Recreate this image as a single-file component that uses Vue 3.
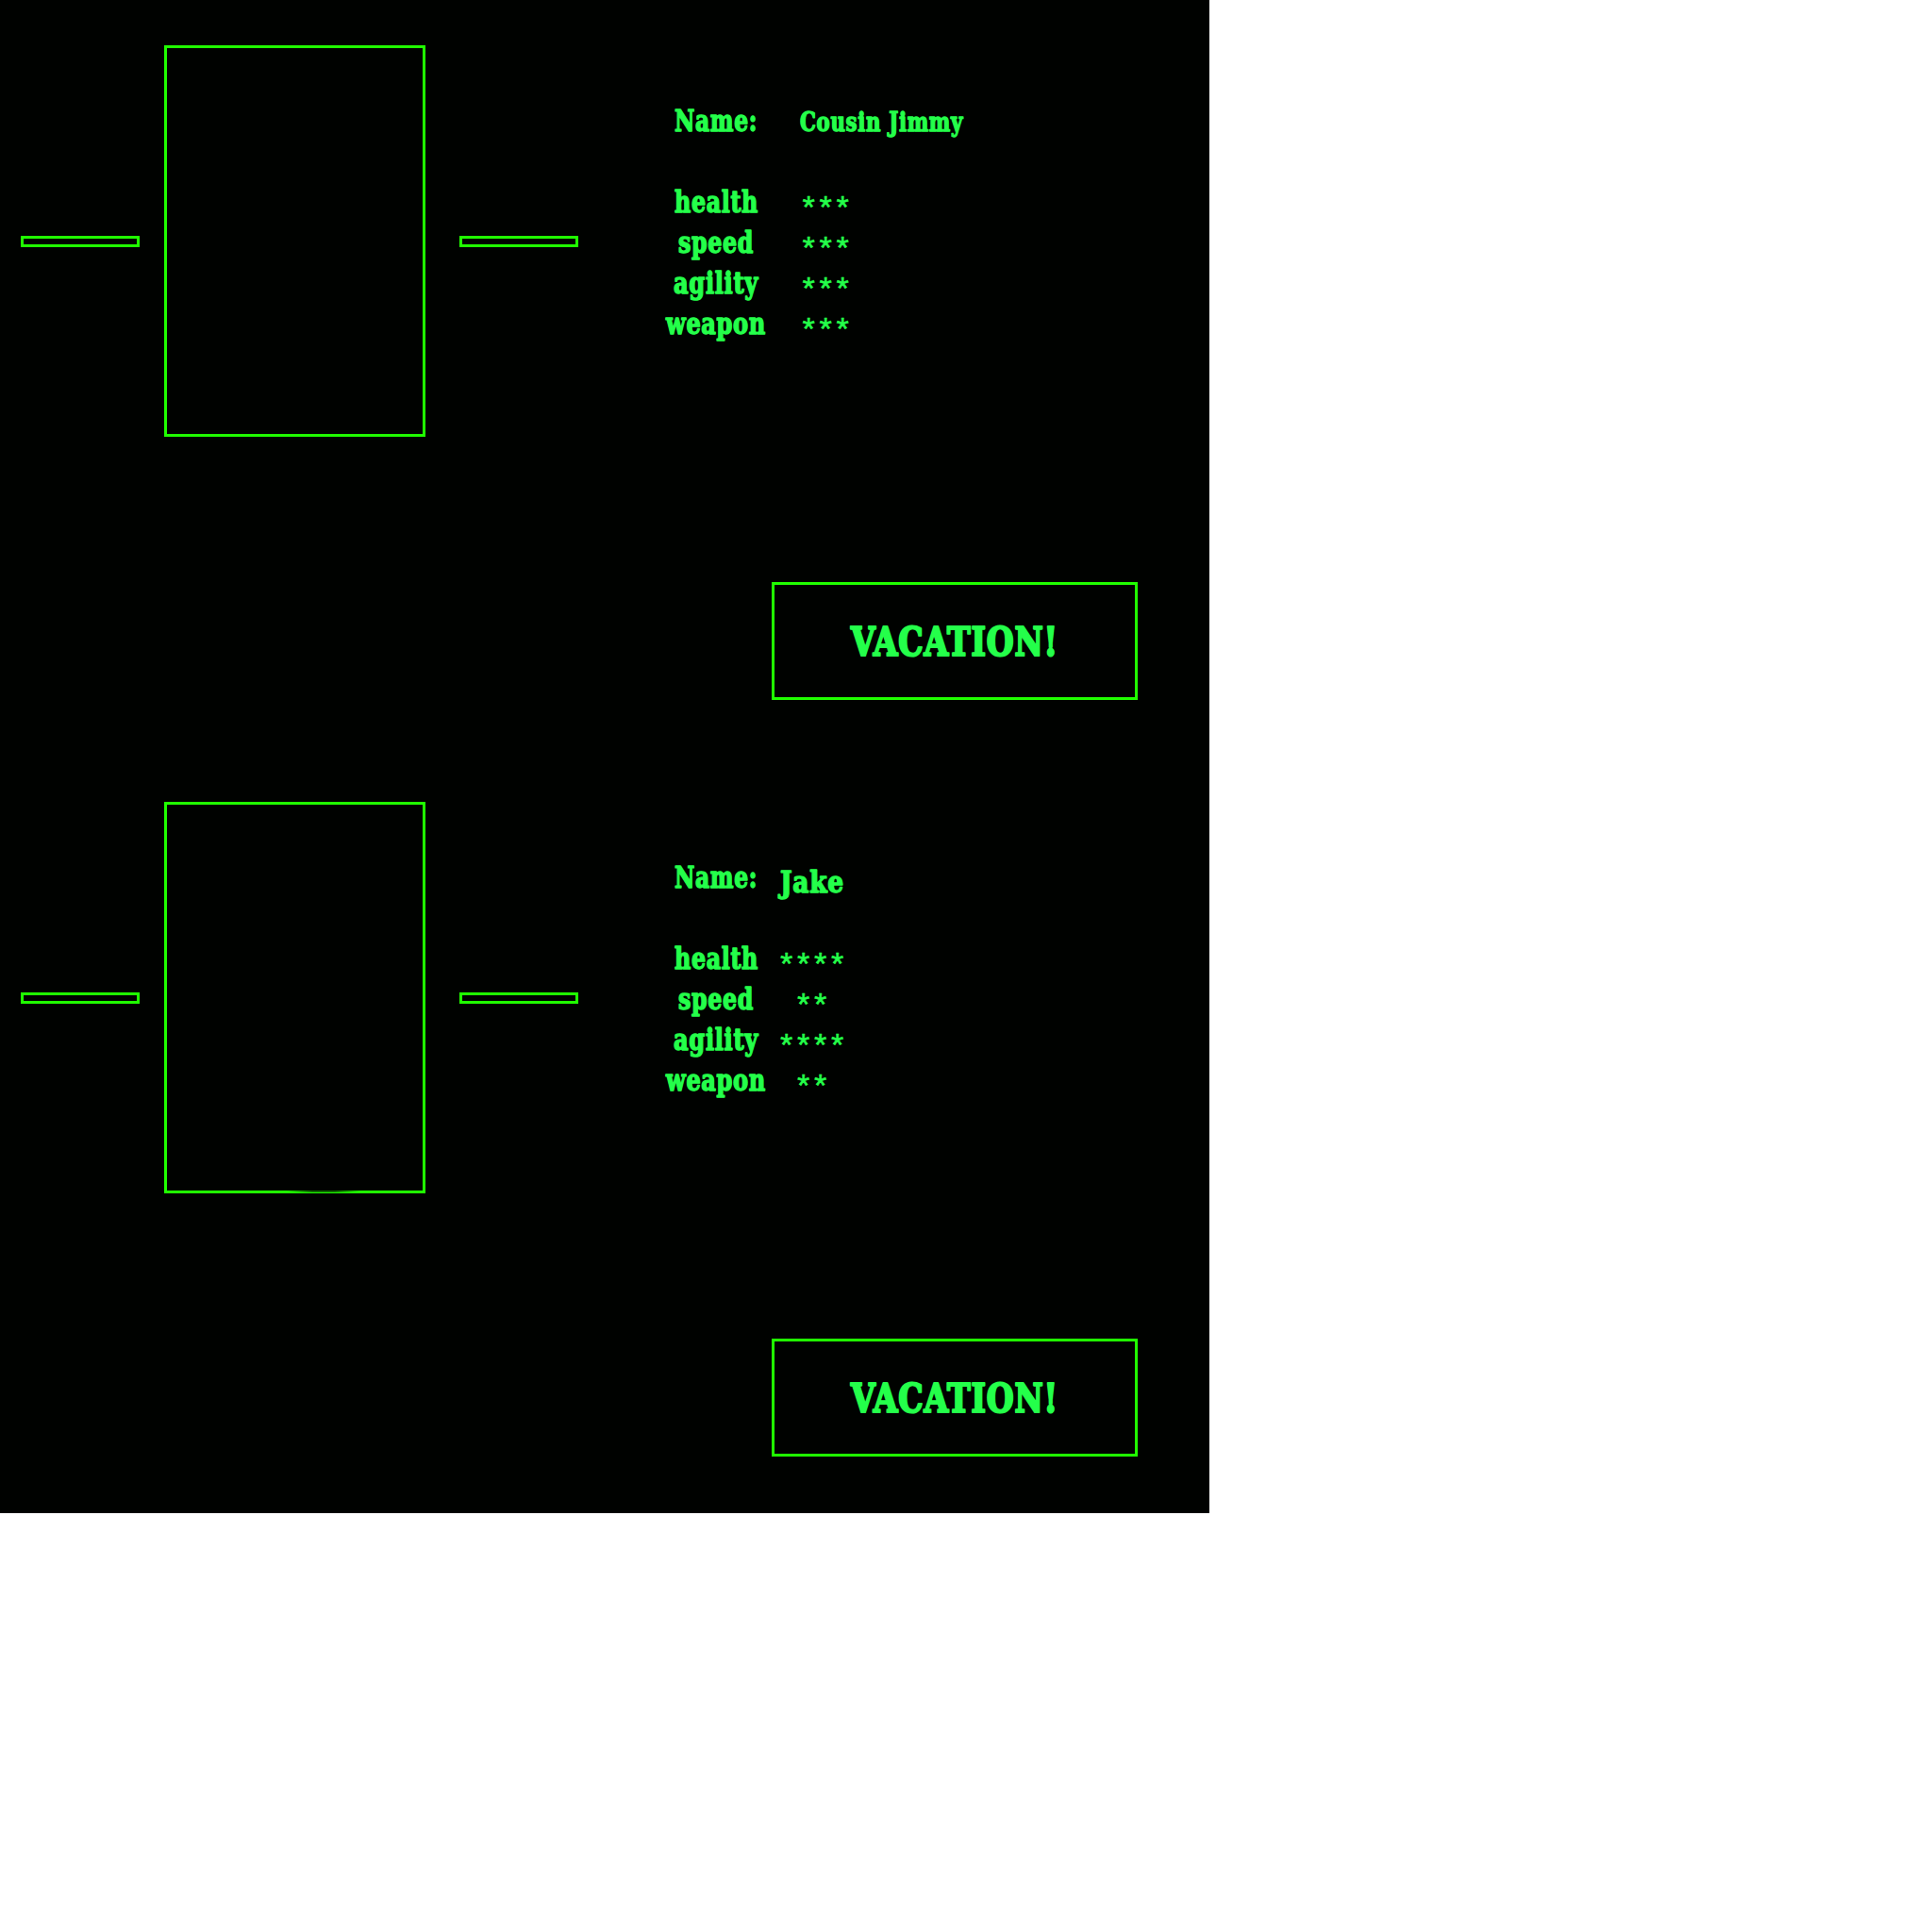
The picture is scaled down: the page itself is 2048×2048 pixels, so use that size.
<script setup>
const labels = [
  { text: 'Name:', width: 88 },
  null,
  { text: 'health', width: 89 },
  { text: 'speed', width: 80 },
  { text: 'agility', width: 90 },
  { text: 'weapon', width: 106 },
]
const characters = [
  { id: 'jimmy', name: 'Cousin Jimmy', width: 173, size: 27.5, stats: [3, 3, 3, 3] },
  { id: 'jake', name: 'Jake', width: 68, size: 31.5, stats: [4, 2, 4, 2] },
]
</script>

<template>
  <main class="page">
    <section v-for="c in characters" :key="c.id" class="panel" :class="c.id">
      <div class="selector">
        <div class="bar"></div>
        <div class="portrait"></div>
        <div class="bar"></div>
      </div>
      <div class="side">
        <div class="info">
          <div class="labels">
            <div v-for="(l, i) in labels" :key="i" class="row">
              <svg v-if="l" class="word" :width="l.width" height="43">
                <text x="0" y="31.5" font-size="31.5" :textLength="l.width" lengthAdjust="spacingAndGlyphs">{{ l.text }}</text>
              </svg>
            </div>
          </div>
          <div class="values">
            <div class="row name">
              <svg class="word" :width="c.width" height="43">
                <text x="0" y="31.5" :font-size="c.size" :textLength="c.width" lengthAdjust="spacingAndGlyphs">{{ c.name }}</text>
              </svg>
            </div>
            <div class="row"></div>
            <div v-for="(n, i) in c.stats" :key="i" class="row stars">{{ '*'.repeat(n) }}</div>
          </div>
        </div>
        <button class="vacation">
          <svg class="word title" width="220" height="60">
            <text x="0" y="45.5" font-size="42" textLength="220" lengthAdjust="spacingAndGlyphs">VACATION!</text>
          </svg>
        </button>
      </div>
    </section>
  </main>
</template>

<style>
body { margin: 0; background: #fff; }
</style>

<style scoped>
.page { width: 1282px; }
.panel {
  box-sizing: border-box;
  width: 1282px;
  height: 802px;
  padding: 48px 0 0 22px;
  display: flex;
  background: #000200;
  color: #24ff4a;
}
.selector {
  display: flex;
  align-items: center;
  height: 415px;
  width: 591px;
}
.bar {
  box-sizing: border-box;
  width: 126px;
  height: 12px;
  margin-top: 1px;
  border: 3px solid #20ff00;
}
.portrait {
  box-sizing: border-box;
  width: 277px;
  height: 415px;
  margin: 0 36px 0 26px;
  border: 3px solid #20ff00;
}
.jake .portrait {
  position: relative;
}
.jake .portrait::after {
  content: '';
  position: absolute;
  left: 126px;
  bottom: -2px;
  width: 80px;
  height: 2px;
  background: linear-gradient(90deg, transparent, rgba(0, 2, 0, .6) 35%, rgba(0, 2, 0, .6) 65%, transparent);
}
.side { width: 593px; margin-left: 93px; }
.info { display: flex; height: 258px; padding-top: 59px; }
.labels { width: 106px; }
.row { height: 43px; display: flex; justify-content: center; }
.word {
  display: block;
  flex-shrink: 0;
  overflow: visible;
  fill: currentColor;
  stroke: currentColor;
  stroke-width: 1.4px;
  stroke-linejoin: round;
  font-family: 'DejaVu Serif Condensed', 'DejaVu Serif', serif;
  font-stretch: condensed;
  font-weight: bold;
  letter-spacing: .8px;
}
.title { stroke-width: 2.2px; letter-spacing: 1px; }
.jimmy .values { margin-left: 36px; }
.jimmy .values .row { justify-content: flex-start; }
.jake .values { margin-left: 12px; width: 72px; }
.jake .name { transform: translateY(5px); }
.jake .name .word { margin-left: 1px; }
.stars {
  font: 34px/60px 'Liberation Mono', monospace;
  letter-spacing: -2.4px;
  white-space: pre;
  text-indent: -1px;
  -webkit-text-stroke: .5px currentColor;
}
.vacation {
  display: flex;
  justify-content: center;
  box-sizing: border-box;
  width: 388px;
  height: 125px;
  margin: 252px 0 0 112px;
  padding: 29px 0 0 0;
  border: 3px solid #20ff00;
  background: transparent;
  color: inherit;
}
</style>
